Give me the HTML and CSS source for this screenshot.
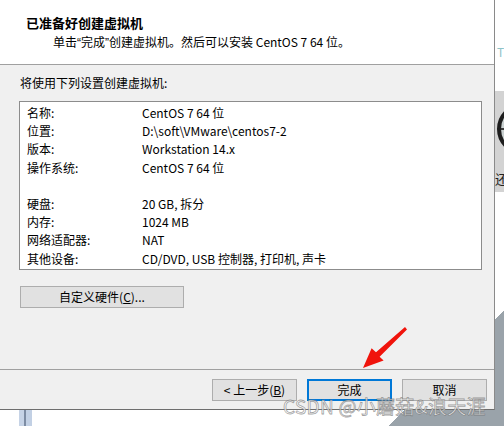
FILE: index.html
```html
<!DOCTYPE html>
<html lang="zh-CN">
<head>
<meta charset="utf-8">
<title>新建虚拟机向导</title>
<link rel="stylesheet" href="styles.css">
</head>
<body>
<div class="top-row">
  <div class="dialog">
    <div class="header">
      <div class="title">已准备好创建虚拟机</div>
      <div class="subtitle">单击<span class="q">“</span>完成<span class="q">”</span>创建虚拟机。然后可以安装 CentOS 7 64 位。</div>
    </div>
    <div class="content">
      <div class="intro">将使用下列设置创建虚拟机:</div>
      <div class="summary">
        <div class="row"><span class="key">名称:</span><span class="val">CentOS 7 64 位</span></div>
        <div class="row"><span class="key">位置:</span><span class="val">D:\soft\VMware\centos7-2</span></div>
        <div class="row"><span class="key">版本:</span><span class="val">Workstation 14.x</span></div>
        <div class="row"><span class="key">操作系统:</span><span class="val">CentOS 7 64 位</span></div>
        <div class="row blank"></div>
        <div class="row"><span class="key">硬盘:</span><span class="val">20 GB, 拆分</span></div>
        <div class="row"><span class="key">内存:</span><span class="val">1024 MB</span></div>
        <div class="row"><span class="key">网络适配器:</span><span class="val">NAT</span></div>
        <div class="row"><span class="key">其他设备:</span><span class="val">CD/DVD, USB 控制器, 打印机, 声卡</span></div>
      </div>
      <button class="btn btn-custom">自定义硬件(<u>C</u>)...</button>
    </div>
    <div class="footer">
      <button class="btn">&lt; 上一步(<u>B</u>)</button>
      <button class="btn btn-default">完成</button>
      <button class="btn">取消</button>
    </div>
  </div>
  <div class="aside">
    <div class="aside-top"><span class="teal">T</span></div>
    <div class="aside-panel">
      <div class="ring"></div>
      <div class="aside-char">还</div>
    </div>
  </div>
</div>
<div class="below">
  <div class="taskbar-bit"></div>
</div>

<svg class="arrow" width="504" height="426" viewBox="0 0 504 426">
  <polygon points="405,327 376,352.2 371.6,348.2 363,368 383.6,360.6 379.6,356.8 407,329.4" fill="#f0140c"/>
</svg>
<div class="watermark">CSDN @小蘑菇&amp;浪天涯</div>
</body>
</html>
```

FILE: styles.css
```css
html {
  margin: 0;
  background: #ffffff;
}
body {
  margin: 0;
  width: 504px;
  height: 426px;
  overflow: hidden;
  position: relative;
  font-family: "Noto Sans CJK SC", "Noto Sans", sans-serif;
  font-size: 12px;
  color: #000;
  background: linear-gradient(135deg, #ffffff 0, #ffffff 576px, #9aa3aa 576px, #9aa3aa 100%);
}
.top-row {
  display: flex;
  height: 410px;
}
.dialog {
  width: 494px;
  height: 409px;
  border-right: 1px solid #8a8a8a;
  border-bottom: 1px solid #6e6e6e;
  display: flex;
  flex-direction: column;
  flex: none;
}
.header {
  background: #ffffff;
  border-bottom: 1px solid #a0a0a0;
  box-sizing: border-box;
  height: 65px;
  padding: 14px 0 0 26px;
}
.title {
  font-size: 13px;
  font-weight: bold;
  line-height: 18px;
}
.subtitle {
  padding-left: 27px;
  line-height: 18px;
  margin-top: 1px;
}
.q {
  font-family: "Liberation Sans", sans-serif;
}
.content {
  flex: 1;
  background: #f0f0f0;
  padding: 9px 12px 0 19px;
}
.intro {
  line-height: 18px;
  padding-left: 1px;
}
.summary {
  margin-top: 9px;
  height: 165px;
  background: #ffffff;
  border: 1px solid #8c8c8c;
  padding: 2px 0 0 7px;
}
.row {
  display: flex;
  height: 18.2px;
  line-height: 18.2px;
}
.key {
  width: 115px;
  flex: none;
}
.btn {
  font-family: inherit;
  font-size: 12px;
  color: #000;
  background: #e1e1e1;
  border: 1px solid #adadad;
  height: 22px;
  padding: 0;
  line-height: 18px;
  box-sizing: border-box;
}
.btn-custom {
  display: block;
  margin: 16px 0 0 1px;
  width: 164px;
}
.footer {
  height: 40px;
  box-sizing: border-box;
  border-top: 1px solid #a0a0a0;
  background: #f0f0f0;
  display: flex;
  justify-content: flex-end;
  gap: 10px;
  padding: 9px 7px 0 0;
}
.footer .btn {
  width: 85px;
}
.btn-default {
  border: 2px solid #0078d7;
}
.aside {
  flex: 1;
  overflow: hidden;
  display: flex;
  flex-direction: column;
}
.aside-top {
  height: 91px;
  background: #ffffff;
}
.teal {
  display: block;
  padding: 45px 0 0 2px;
  color: #8ec3c8;
  font-size: 12px;
  line-height: 14px;
}
.aside-panel {
  height: 101px;
  background: #d3d3d3;
  padding-top: 12px;
  box-sizing: border-box;
}
.ring {
  width: 44px;
  height: 44px;
  border: 4px solid #1e1e1e;
  border-radius: 50%;
  margin-left: 2px;
  background: linear-gradient(#c9d0d0 0, #c9d0d0 21px, #3a3a3a 21px, #3a3a3a 23px, #c9d0d0 23px);
}
.aside-char {
  margin-top: 16px;
  font-size: 13px;
  line-height: 16px;
  color: #222;
  white-space: nowrap;
}
.below {
  height: 16px;
  padding-left: 19px;
}
.taskbar-bit {
  width: 13px;
  height: 16px;
  background: linear-gradient(90deg, #c6d3e6 0, #c6d3e6 5px, #7d8ca3 5px, #7d8ca3 7px, #c2d0e4 7px);
}
.arrow {
  position: absolute;
  left: 0;
  top: 0;
  pointer-events: none;
}
.watermark {
  position: absolute;
  left: 283px;
  top: 394px;
  font-size: 19px;
  line-height: 24px;
  color: rgba(255, 255, 255, 0.8);
  -webkit-text-stroke: 0.8px rgba(100, 100, 100, 0.6);
  white-space: nowrap;
  letter-spacing: 0.3px;
}
```
